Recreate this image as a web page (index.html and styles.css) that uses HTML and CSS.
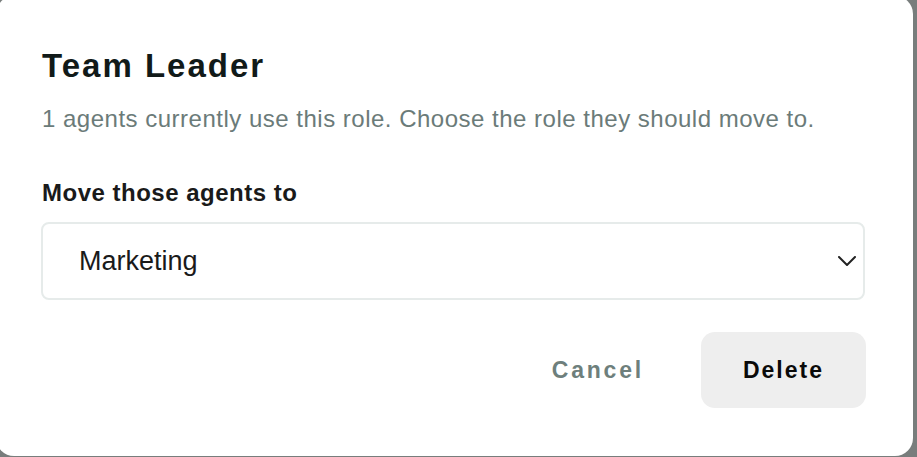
FILE: index.html
```html
<!DOCTYPE html>
<html lang="en">
<head>
<meta charset="utf-8">
<title>Team Leader</title>
<link rel="stylesheet" href="styles.css">
</head>
<body>
<div class="dialog">
  <h1 class="title">Team Leader</h1>
  <p class="subtitle">1 agents currently use this role. Choose the role they should move to.</p>
  <div class="field-label">Move those agents to</div>
  <div class="select">
    <span class="select-value">Marketing</span>
    <svg class="chevron" width="18" height="10" viewBox="0 0 18 10" aria-hidden="true"><path d="M1 1 L9 9 L17 1" fill="none" stroke="#222" stroke-width="2" stroke-linecap="round" stroke-linejoin="round"/></svg>
  </div>
  <div class="actions">
    <button class="btn btn-cancel">Cancel</button>
    <button class="btn btn-delete">Delete</button>
  </div>
</div>
</body>
</html>
```

FILE: styles.css
```css
html, body {
  margin: 0;
  padding: 0;
}
body {
  background: #787d7c;
  width: 917px;
  height: 457px;
  overflow: hidden;
  font-family: "Liberation Sans", Arial, sans-serif;
}
.dialog {
  box-sizing: border-box;
  width: 917px;
  height: 460px;
  margin: -4px 0 0 -4px;
  background: #ffffff;
  border-radius: 18px;
  padding: 52px 48px 0 46px;
  display: flex;
  flex-direction: column;
}
.title {
  margin: 0;
  font-size: 33px;
  line-height: 36px;
  font-weight: 700;
  letter-spacing: 2px;
  color: #111a19;
}
.subtitle {
  margin: 21px 0 0;
  font-size: 24px;
  line-height: 28px;
  letter-spacing: 0.5px;
  color: #6b7b79;
}
.field-label {
  margin-top: 46px;
  font-size: 24px;
  line-height: 28px;
  font-weight: 700;
  color: #1a1a1a;
  letter-spacing: 0.5px;
}
.select {
  box-sizing: border-box;
  margin-top: 15px;
  margin-left: -1px;
  height: 78px;
  border: 2px solid #e6ebea;
  border-radius: 8px;
  display: flex;
  align-items: center;
  justify-content: space-between;
  padding: 0 7px 0 36px;
}
.select-value {
  font-size: 27px;
  color: #1a1a1a;
}
.chevron {
  display: block;
}
.actions {
  margin-top: 32px;
  display: flex;
  justify-content: flex-end;
  align-items: center;
}
.btn {
  font-family: "Liberation Sans", Arial, sans-serif;
  font-weight: 700;
  font-size: 23px;
  letter-spacing: 2px;
  border: none;
  background: transparent;
  cursor: pointer;
  height: 76px;
  border-radius: 14px;
}
.btn-cancel {
  color: #6e7f7c;
  letter-spacing: 2.8px;
  padding: 0 28px;
  margin-right: 29px;
}
.btn-delete {
  width: 165px;
  background: #eeeeee;
  color: #0a0a0a;
  margin-right: -1px;
}
```
